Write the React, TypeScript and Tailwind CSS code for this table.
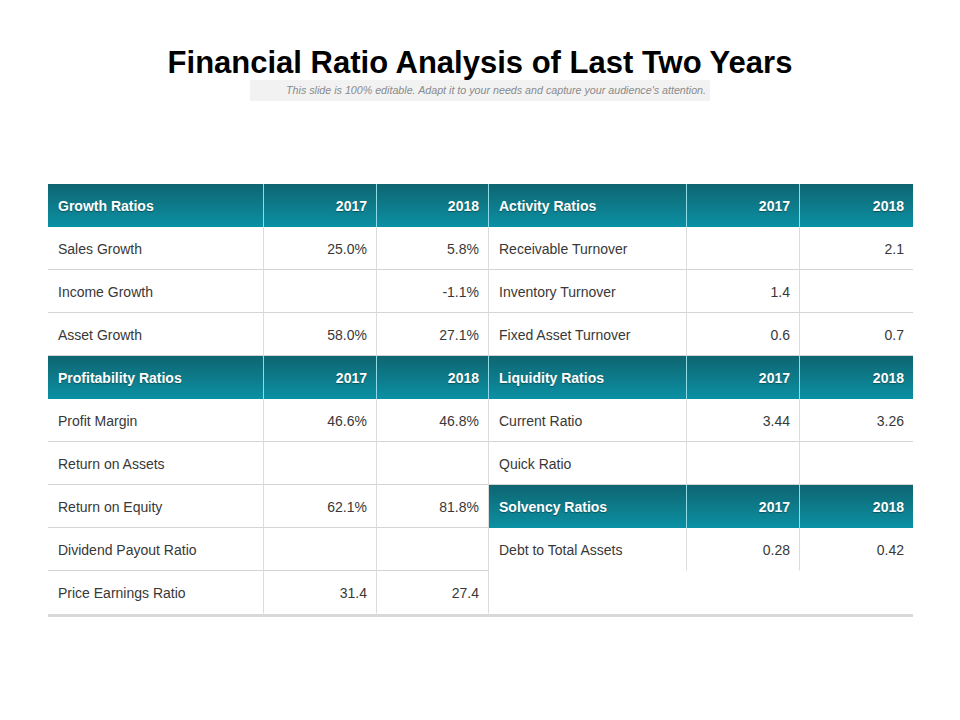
import React from "react";

type Row = { label: string; a?: string; b?: string; header?: boolean; empty?: boolean; nob?: boolean };

const left: Row[] = [
  { label: "Growth Ratios", a: "2017", b: "2018", header: true },
  { label: "Sales Growth", a: "25.0%", b: "5.8%" },
  { label: "Income Growth", a: "", b: "-1.1%" },
  { label: "Asset Growth", a: "58.0%", b: "27.1%" },
  { label: "Profitability Ratios", a: "2017", b: "2018", header: true },
  { label: "Profit Margin", a: "46.6%", b: "46.8%" },
  { label: "Return on Assets", a: "", b: "" },
  { label: "Return on Equity", a: "62.1%", b: "81.8%" },
  { label: "Dividend Payout Ratio", a: "", b: "" },
  { label: "Price Earnings Ratio", a: "31.4", b: "27.4", nob: true },
];

const right: Row[] = [
  { label: "Activity Ratios", a: "2017", b: "2018", header: true },
  { label: "Receivable Turnover", a: "", b: "2.1" },
  { label: "Inventory Turnover", a: "1.4", b: "" },
  { label: "Fixed Asset Turnover", a: "0.6", b: "0.7" },
  { label: "Liquidity Ratios", a: "2017", b: "2018", header: true },
  { label: "Current Ratio", a: "3.44", b: "3.26" },
  { label: "Quick Ratio", a: "", b: "" },
  { label: "Solvency Ratios", a: "2017", b: "2018", header: true },
  { label: "Debt to Total Assets", a: "0.28", b: "0.42", nob: true },
  { label: "", empty: true },
];

const hdr =
  "h-[43px] flex items-center pt-[2px] bg-gradient-to-b from-[#0e6571] to-[#0a91a4] text-white font-bold text-[14px] pl-[10px] pr-[9px] [text-shadow:0_1px_1px_rgba(0,0,0,0.35)]";
const body = "h-[43px] flex items-center pt-[2px] text-[#383838] text-[14px] pl-[10px] pr-[9px] border-b";

function Table({ rows, cols, lastBorder }: { rows: Row[]; cols: string; lastBorder: boolean }) {
  return (
    <div className={`grid ${cols}`}>
      {rows.map((r, i) => {
        if (r.empty) {
          return <div key={i} className="col-span-3 h-[43px]" />;
        }
        if (r.header) {
          return (
            <React.Fragment key={i}>
              <div className={`${hdr} border-r border-[#8fdbe6]`}>{r.label}</div>
              <div className={`${hdr} justify-end border-r border-[#8fdbe6]`}>{r.a}</div>
              <div className={`${hdr} justify-end ${lastBorder ? "border-r border-[#8fdbe6]" : ""}`}>{r.b}</div>
            </React.Fragment>
          );
        }
        const bb = r.nob ? "border-b-transparent" : "border-b-[#d4d4d4]";
        return (
          <React.Fragment key={i}>
            <div className={`${body} ${bb} border-r border-r-[#dcdcdc]`}>{r.label}</div>
            <div className={`${body} ${bb} justify-end border-r border-r-[#dcdcdc]`}>{r.a}</div>
            <div className={`${body} ${bb} justify-end ${lastBorder ? "border-r border-r-[#dcdcdc]" : ""}`}>{r.b}</div>
          </React.Fragment>
        );
      })}
    </div>
  );
}

export default function App() {
  return (
    <div className="w-[960px] h-[720px] bg-white relative" style={{ fontFamily: '"Liberation Sans", Arial, sans-serif' }}>
      <div className="pt-[46px] flex flex-col items-center">
        <h1 className="text-[31px] leading-[34px] font-bold text-black">Financial Ratio Analysis of Last Two Years</h1>
        <div className="w-[460px] h-[21px] bg-[#f2f2f2] flex items-center justify-end pr-[4px] text-[10.7px] italic text-[#8a8a8a]">
          This slide is 100% editable. Adapt it to your needs and capture your audience's attention.
        </div>
      </div>
      <div className="mt-[83px] ml-[48px] w-[865px] flex border-b-[3px] border-[#d9d9d9]">
        <Table rows={left} cols="grid-cols-[216px_113px_112px]" lastBorder={true} />
        <Table rows={right} cols="grid-cols-[198px_113px_113px]" lastBorder={false} />
      </div>
    </div>
  );
}
